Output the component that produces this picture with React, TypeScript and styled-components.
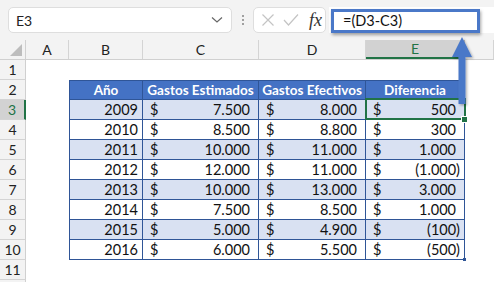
import React from "react"
import styled, { createGlobalStyle, css } from "styled-components"

const GlobalStyle = createGlobalStyle`
  html, body {
    margin: 0;
    padding: 0;
    background: #ffffff;
    overflow: hidden;
  }
  body {
    font-family: Lato, "Liberation Sans", sans-serif;
  }
`

const GREEN = "#217346"
const BLUE = "#4472c4"
const LINE = "#2f5597"

type Row = { year: string; est: string; ef: string; diff: string }

const rows: Row[] = [
  { year: "2009", est: "7.500", ef: "8.000", diff: "500" },
  { year: "2010", est: "8.500", ef: "8.800", diff: "300" },
  { year: "2011", est: "10.000", ef: "11.000", diff: "1.000" },
  { year: "2012", est: "12.000", ef: "11.000", diff: "(1.000)" },
  { year: "2013", est: "10.000", ef: "13.000", diff: "3.000" },
  { year: "2014", est: "7.500", ef: "8.500", diff: "1.000" },
  { year: "2015", est: "5.000", ef: "4.900", diff: "(100)" },
  { year: "2016", est: "6.000", ef: "5.500", diff: "(500)" },
]

const cols = ["A", "B", "C", "D", "E", ""]

const App: React.FC = () => {
  return (
    <Page>
      <GlobalStyle />
      <FormulaBar>
        <NameBox>
          <span>E3</span>
          <svg width="12" height="8" viewBox="0 0 12 8">
            <polyline points="1,1.5 6,6 11,1.5" fill="none" stroke="#666" strokeWidth="1.2" />
          </svg>
        </NameBox>
        <Dots>
          <i />
          <i />
          <i />
        </Dots>
        <FxBox>
          <svg width="14" height="14" viewBox="0 0 14 14">
            <path d="M1.5 1.5 L12.5 12.5 M12.5 1.5 L1.5 12.5" stroke="#c4c4c4" strokeWidth="1.2" />
          </svg>
          <svg width="16" height="14" viewBox="0 0 16 14">
            <polyline points="1,7 5.5,12 15,1.5" fill="none" stroke="#c4c4c4" strokeWidth="1.2" />
          </svg>
          <Fx>fx</Fx>
        </FxBox>
        <FormulaInput>=(D3-C3)</FormulaInput>
        <Highlight />
      </FormulaBar>

      <Sheet>
        <ColHeaderRow>
          <Corner>
            <svg width="12" height="12" viewBox="0 0 12 12">
              <polygon points="12,0 12,12 0,12" fill="#bdbdbd" />
            </svg>
          </Corner>
          {cols.map((c, i) => (
            <ColHeader key={i} $active={c === "E"}>
              {c}
            </ColHeader>
          ))}
        </ColHeaderRow>

        <GridRow>
          <RowHeader>1</RowHeader>
        </GridRow>

        <GridRow>
          <RowHeader>2</RowHeader>
          <Blank />
          <HeadCell $first>Año</HeadCell>
          <HeadCell>Gastos Estimados</HeadCell>
          <HeadCell>Gastos Efectivos</HeadCell>
          <HeadCell>Diferencia</HeadCell>
        </GridRow>

        {rows.map((r, i) => {
          const band = i % 2 === 0
          const neg = r.diff.startsWith("(")
          return (
            <GridRow key={r.year}>
              <RowHeader $active={i === 0}>{i + 3}</RowHeader>
              <Blank />
              <YearCell $band={band}>{r.year}</YearCell>
              <MoneyCell $band={band}>
                <span>$</span>
                <Amount>{r.est}</Amount>
              </MoneyCell>
              <MoneyCell $band={band}>
                <span>$</span>
                <Amount>{r.ef}</Amount>
              </MoneyCell>
              <MoneyCell $band={band} $selected={i === 0} $last={i === rows.length - 1}>
                <span>$</span>
                <Amount $neg={neg}>{r.diff}</Amount>
              </MoneyCell>
            </GridRow>
          )
        })}

        <GridRow>
          <RowHeader>11</RowHeader>
        </GridRow>
        <GridRow>
          <RowHeader />
        </GridRow>
      </Sheet>

      <Arrow width="30" height="72" viewBox="0 0 30 72">
        <defs>
          <filter id="sh" x="-30%" y="-10%" width="160%" height="130%">
            <feDropShadow dx="1.5" dy="1.5" stdDeviation="1" floodColor="#000" floodOpacity="0.3" />
          </filter>
        </defs>
        <path
          d="M12 1 L2 21 L8.5 21 L8.5 68 L15.5 68 L15.5 21 L22 21 Z"
          fill="#4a78c8"
          filter="url(#sh)"
        />
      </Arrow>
    </Page>
  )
}

export default App

const Page = styled.div`
  position: relative;
  width: 494px;
  height: 282px;
  overflow: hidden;
  background: #fff;
`

const FormulaBar = styled.div`
  position: relative;
  height: 40px;
  background: #f3f3f3;
  display: flex;
  align-items: center;
  padding-left: 8px;
  box-sizing: border-box;
`

const NameBox = styled.div`
  width: 224px;
  height: 26px;
  box-sizing: border-box;
  background: #fff;
  border: 1px solid #dedede;
  border-radius: 5px;
  display: flex;
  align-items: center;
  justify-content: space-between;
  padding: 0 8px 0 7px;
  font-size: 14px;
  color: #222;
`

const Dots = styled.div`
  width: 21px;
  display: flex;
  flex-direction: column;
  align-items: center;
  gap: 2px;
  i {
    width: 2px;
    height: 2px;
    background: #a0a0a0;
    display: block;
  }
`

const FxBox = styled.div`
  width: 73px;
  height: 26px;
  box-sizing: border-box;
  background: #fff;
  border: 1px solid #dedede;
  border-radius: 5px;
  display: flex;
  align-items: center;
  gap: 8px;
  padding-left: 7px;
`

const Fx = styled.span`
  font-family: "Liberation Serif", serif;
  font-style: italic;
  font-size: 18px;
  color: #333;
  margin-left: 2px;
`

const FormulaInput = styled.div`
  flex: 1;
  height: 26px;
  margin-left: 3px;
  background: #fff;
  display: flex;
  align-items: center;
  padding-left: 14px;
  font-size: 14.5px;
  color: #111;
`

const Highlight = styled.div`
  position: absolute;
  left: 331px;
  top: 9px;
  width: 149px;
  height: 24px;
  box-sizing: border-box;
  border: 3px solid #4a78c8;
  box-shadow: 1px 2px 3px rgba(0, 0, 0, 0.35);
`

const Sheet = styled.div`
  display: flex;
  flex-direction: column;
`

const gridCols = css`
  display: grid;
  grid-template-columns: 26px 43px 74px 116px 107px 99px 1fr;
`

const ColHeaderRow = styled.div`
  ${gridCols};
  height: 19px;
  background: #f3f3f3;
  border-bottom: 1px solid #d0d0d0;
`

const Corner = styled.div`
  display: flex;
  align-items: flex-end;
  justify-content: flex-end;
  padding: 0 3px 3px 0;
  border-right: 1px solid #d0d0d0;
`

const ColHeader = styled.div<{ $active?: boolean }>`
  display: flex;
  align-items: center;
  justify-content: center;
  font-size: 14px;
  color: #222;
  border-right: 1px solid #d4d4d4;
  box-sizing: border-box;
  ${(p) =>
    p.$active &&
    css`
      background: #d2d2d2;
      color: ${GREEN};
      border-bottom: 2px solid ${GREEN};
      border-right-color: #bdbdbd;
    `}
`

const GridRow = styled.div`
  ${gridCols};
  height: 20px;
`

const RowHeader = styled.div<{ $active?: boolean }>`
  background: #f3f3f3;
  border-right: 1px solid #d0d0d0;
  border-bottom: 1px solid #d4d4d4;
  box-sizing: border-box;
  display: flex;
  align-items: center;
  justify-content: center;
  font-size: 14px;
  color: #222;
  ${(p) =>
    p.$active &&
    css`
      background: #d2d2d2;
      color: ${GREEN};
      border-right: 2px solid ${GREEN};
    `}
`

const Blank = styled.div``

const cellBase = css`
  box-sizing: border-box;
  border-right: 1px solid ${LINE};
  border-bottom: 1px solid ${LINE};
  font-size: 14.5px;
  color: #111;
  display: flex;
  align-items: center;
  white-space: nowrap;
`

const HeadCell = styled.div<{ $first?: boolean }>`
  ${cellBase};
  background: ${BLUE};
  border-top: 1px solid ${LINE};
  ${(p) => p.$first && `border-left: 1px solid ${LINE};`}
  justify-content: center;
  color: #fff;
  font-weight: 700;
  font-size: 13.5px;
  overflow: hidden;
`

const YearCell = styled.div<{ $band: boolean }>`
  ${cellBase};
  background: ${(p) => (p.$band ? "#d9e1f2" : "#fff")};
  border-left: 1px solid ${LINE};
  justify-content: flex-end;
  padding-right: 4px;
`

const MoneyCell = styled.div<{ $band: boolean; $selected?: boolean; $last?: boolean }>`
  ${cellBase};
  position: relative;
  background: ${(p) => (p.$band ? "#d9e1f2" : "#fff")};
  justify-content: space-between;
  padding: 0 4px 0 7px;
  ${(p) =>
    p.$selected &&
    css`
      &::after {
        content: "";
        position: absolute;
        left: -1px;
        top: -2px;
        right: -2px;
        bottom: -1px;
        border: 2px solid ${GREEN};
      }
      &::before {
        content: "";
        position: absolute;
        right: -4px;
        bottom: -4px;
        width: 5px;
        height: 5px;
        background: ${GREEN};
        border: 1px solid #fff;
        z-index: 1;
      }
    `}
  ${(p) =>
    p.$last &&
    css`
      &::before {
        content: "";
        position: absolute;
        right: -2px;
        bottom: -2px;
        width: 3px;
        height: 3px;
        background: ${LINE};
      }
    `}
`

const Amount = styled.span<{ $neg?: boolean }>`
  padding-right: ${(p) => (p.$neg ? "0" : "4px")};
`

const Arrow = styled.svg`
  position: absolute;
  left: 450px;
  top: 36px;
  overflow: visible;
`
